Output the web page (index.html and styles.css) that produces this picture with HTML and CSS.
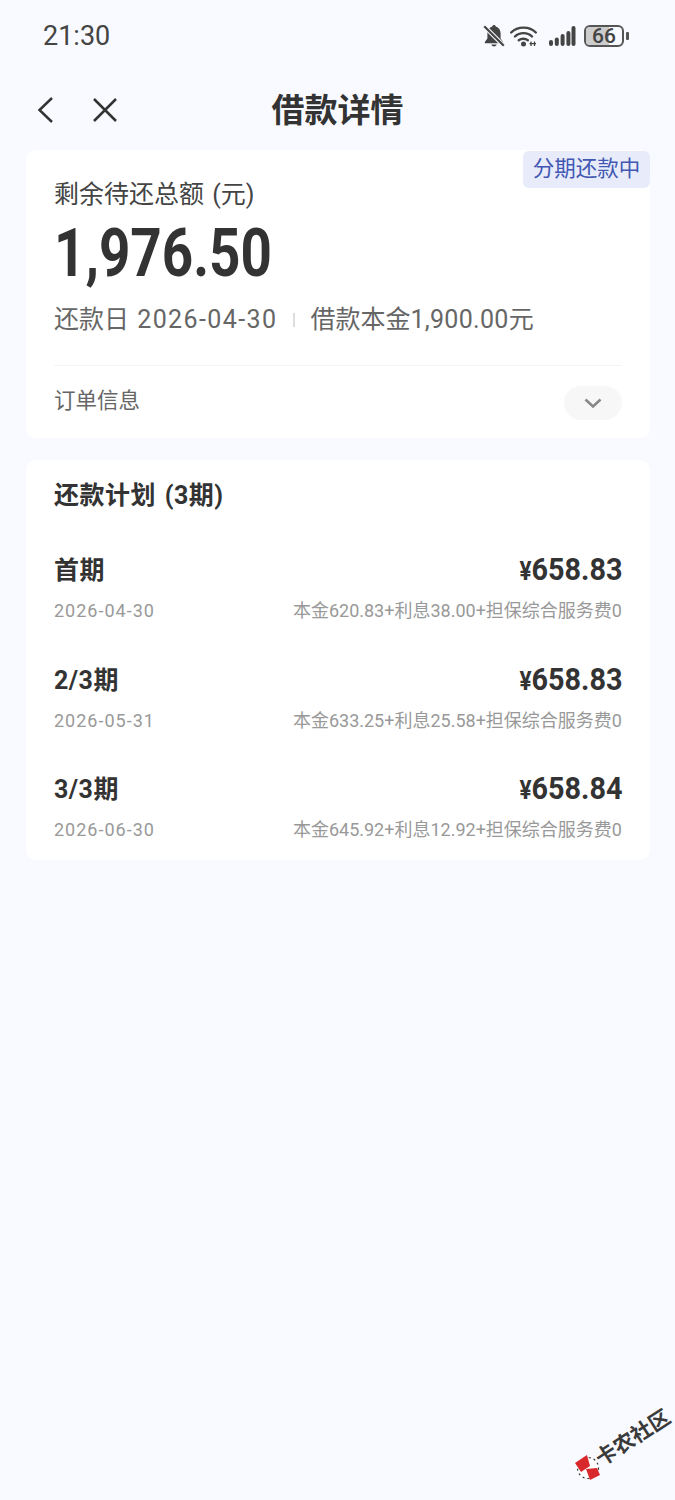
FILE: index.html
```html
<!DOCTYPE html>
<html lang="zh-CN">
<head>
  <meta charset="UTF-8">
  <meta name="viewport" content="width=device-width, initial-scale=1.0">
  <title>借款详情</title>
  <link rel="stylesheet" href="styles.css">
</head>
<body>
  <div class="page">
    <div class="status-bar">
      <div class="clock">21:30</div>
      <div class="status-icons">
        <svg class="icon-bell" width="22" height="22" viewBox="2 2 18 18">
          <path d="M11 2c-.8 0-1.300.5-1.400 1.200C7 4 5.600 6 5.600 8.800v4.200L3.500 16v1h15v-1l-2.100-3V8.800C16.400 6 15 4 12.400 3.200 12.300 2.500 11.800 2 11 2z" fill="#444"/>
          <path d="M8.800 18h4.400c-.3 1-1.100 1.600-2.200 1.600S9.100 19 8.800 18z" fill="#444"/>
          <path d="M3 3l16 16" stroke="#f9faff" stroke-width="3.600"/>
          <path d="M3 3l16 16" stroke="#444" stroke-width="1.800"/>
        </svg>
        <svg class="icon-wifi" width="28" height="22" viewBox="0 0 28 22">
          <path d="M1.200 7.500C7.500 1 19.500 1 25.800 7.500M5 11.500C9.500 7 17.500 7 22 11.500M8.800 15.200c2.500-2 6.500-2 9 0" fill="none" stroke="#444" stroke-width="2.400" stroke-linecap="round"/>
          <circle cx="13.500" cy="19" r="2.500" fill="#444"/>
          <path d="M21 16.500v4.500M24.500 16.500v4.500M19.500 18.700h6.500" stroke="#444" stroke-width="1.300"/>
        </svg>
        <svg class="icon-signal" width="28" height="22" viewBox="0 0 28 22">
          <rect x="1" y="15" width="4" height="6" rx="2" fill="#444"/>
          <rect x="6.800" y="12.500" width="4" height="8.500" rx="2" fill="#444"/>
          <rect x="12.600" y="9" width="4" height="12" rx="2" fill="#444"/>
          <rect x="18.400" y="6" width="4" height="15" rx="2" fill="#444"/>
          <rect x="23.500" y="1" width="4" height="20" rx="2" fill="#444"/>
        </svg>
        <div class="battery">
          <div class="battery-body"><span class="battery-level"></span><span class="battery-num">66</span></div>
          <div class="battery-tip"></div>
        </div>
      </div>
    </div>

    <div class="nav-bar">
      <svg class="nav-back" width="20" height="28" viewBox="0 0 20 28">
        <path d="M16 2L3.500 14 16 26" fill="none" stroke="#333" stroke-width="2.500"/>
      </svg>
      <svg class="nav-close" width="28" height="28" viewBox="0 0 28 28">
        <path d="M3 3l22 22M25 3L3 25" fill="none" stroke="#333" stroke-width="2.500"/>
      </svg>
      <div class="nav-title">借款详情</div>
    </div>

    <div class="card summary">
      <div class="tag">分期还款中</div>
      <div class="summary-label">剩余待还总额 (元)</div>
      <div class="summary-amount">1,976.50</div>
      <div class="summary-meta">
        <span class="meta-date">还款日 <span class="num-wide">2026-04-30</span></span>
        <span class="meta-sep"></span>
        <span>借款本金<span class="num-mid">1,900.00</span>元</span>
      </div>
      <div class="order-row">
        <div class="order-label">订单信息</div>
        <div class="order-toggle">
          <svg width="18" height="11" viewBox="0 0 18 11">
            <path d="M1.500 1.500L9 8.500l7.500-7" fill="none" stroke="#888" stroke-width="2.600"/>
          </svg>
        </div>
      </div>
    </div>

    <div class="card plan">
      <div class="plan-title">还款计划 (3期)</div>
      <div class="plan-row">
        <div class="plan-line">
          <div class="plan-name">首期</div>
          <div class="plan-money"><span class="yen">¥</span>658.83</div>
        </div>
        <div class="plan-line plan-sub">
          <div class="plan-date">2026-04-30</div>
          <div>本金620.83+利息38.00+担保综合服务费0</div>
        </div>
      </div>
      <div class="plan-row">
        <div class="plan-line">
          <div class="plan-name">2/3期</div>
          <div class="plan-money"><span class="yen">¥</span>658.83</div>
        </div>
        <div class="plan-line plan-sub">
          <div class="plan-date">2026-05-31</div>
          <div>本金633.25+利息25.58+担保综合服务费0</div>
        </div>
      </div>
      <div class="plan-row">
        <div class="plan-line">
          <div class="plan-name">3/3期</div>
          <div class="plan-money"><span class="yen">¥</span>658.84</div>
        </div>
        <div class="plan-line plan-sub">
          <div class="plan-date">2026-06-30</div>
          <div>本金645.92+利息12.92+担保综合服务费0</div>
        </div>
      </div>
    </div>

    <svg class="watermark-icon" width="30" height="30" viewBox="0 0 30 30">
      <circle cx="15" cy="15" r="10.500" fill="#fff" stroke="#333" stroke-width="1.200" stroke-dasharray="2 3"/>
      <path d="M2 10L14 2l3 11-9 6z" fill="#d9282c"/>
      <path d="M13 16l11-1 3 7-10 5z" fill="#d9282c"/>
    </svg>
    <div class="watermark-text">卡农社区</div>
  </div>
</body>
</html>
```

FILE: styles.css
```css
body {
  margin: 0;
  padding: 0;
  background-color: #f9faff;
  color: #333;
  font-family: 'Roboto', 'Noto Sans CJK SC', sans-serif;
}

.page {
  position: relative;
  width: 675px;
  height: 1500px;
  overflow: hidden;
}

/* status bar */
.status-bar {
  height: 72px;
  display: flex;
  justify-content: space-between;
  align-items: center;
  padding: 0 46px 0 43px;
  box-sizing: border-box;
}

.clock {
  font-size: 27px;
  color: #444;
}

.status-icons {
  display: flex;
  align-items: center;
}

.icon-wifi {
  margin-left: 5px;
}

.icon-signal {
  margin-left: 10px;
}

.battery {
  display: flex;
  align-items: center;
  gap: 2px;
  margin-left: 8px;
}

.battery-body {
  position: relative;
  width: 40px;
  height: 22px;
  box-sizing: border-box;
  border: 2px solid #555;
  border-radius: 6px;
  overflow: hidden;
  text-align: center;
}

.battery-level {
  position: absolute;
  left: 0;
  top: 0;
  bottom: 0;
  width: 63%;
  background-color: #ccc;
}

.battery-num {
  position: relative;
  font-size: 21px;
  font-weight: 500;
  line-height: 18px;
  color: #444;
  display: block;
}

.battery-tip {
  width: 3px;
  height: 8px;
  background-color: #555;
  border-radius: 1px;
}

/* nav */
.nav-bar {
  position: relative;
  height: 76px;
  margin-bottom: 2px;
  display: flex;
  align-items: center;
  padding-left: 36px;
  box-sizing: border-box;
}

.nav-close {
  margin-left: 35px;
}

.nav-title {
  position: absolute;
  left: 0;
  right: 0;
  padding-bottom: 4px;
  text-align: center;
  font-size: 33px;
  font-weight: 700;
  color: #333;
}

.card {
  background-color: #fff;
  margin: 0 25px 0 26px;
  border-radius: 10px;
  padding: 0 28px;
}

.summary {
  position: relative;
  height: 288px;
  box-sizing: border-box;
}

.tag {
  position: absolute;
  top: 1px;
  right: 0;
  width: 127px;
  height: 37px;
  line-height: 35px;
  text-align: center;
  font-size: 21.500px;
  color: #4257b2;
  background-color: #e8ebfa;
  border-radius: 6px;
}

.summary-label {
  padding-top: 28px;
  font-size: 25px;
  line-height: 34px;
  color: #444;
  word-spacing: 2px;
}

/* DIN-like digits: no condensed font here, so squeeze Roboto */
.summary-amount {
  font-size: 66px;
  line-height: 66px;
  font-weight: 700;
  color: #333;
  margin-top: 9px;
  transform: scaleX(0.83);
  transform-origin: left center;
}

.summary-meta {
  display: flex;
  align-items: center;
  margin-top: 15px;
  font-size: 25px;
  line-height: 36px;
  color: #666;
}

.meta-date {
  word-spacing: 2px;
}

.num-wide {
  letter-spacing: 1.400px;
}

.num-mid {
  letter-spacing: 0.300px;
}

.meta-sep {
  width: 2px;
  height: 14px;
  background-color: #ddd;
  margin: 0 15px 0 16px;
}

.order-row {
  display: flex;
  justify-content: space-between;
  align-items: center;
  margin-top: 27px;
  height: 72px;
  box-sizing: border-box;
  border-top: 1px solid #f4f4f4;
}

.order-label {
  font-size: 21.500px;
  color: #666;
  margin-bottom: 7px;
}

.order-toggle {
  width: 58px;
  height: 34px;
  margin-top: 3px;
  border-radius: 17px;
  background-color: #f7f7f7;
  display: flex;
  align-items: center;
  justify-content: center;
}

.plan {
  margin-top: 22px;
  height: 400px;
  box-sizing: border-box;
  padding-top: 19px;
}

.plan-title {
  font-size: 25px;
  line-height: 34px;
  font-weight: 700;
  color: #333;
  margin-bottom: 38px;
  word-spacing: 2px;
  letter-spacing: 0.500px;
}

.plan-row {
  height: 109.500px;
}

.plan-line {
  display: flex;
  justify-content: space-between;
  align-items: center;
}

.plan-name {
  font-size: 25px;
  font-weight: 700;
  line-height: 38px;
  letter-spacing: 0.500px;
}

.plan-money {
  font-size: 32px;
  font-weight: 700;
  line-height: 38px;
  margin-top: -1px;
  transform: scaleX(0.9);
  transform-origin: right center;
}

.yen {
  font-size: 25px;
}

.plan-sub {
  font-size: 18px;
  line-height: 26px;
  color: #999;
  margin-top: 7px;
}

.plan-date {
  letter-spacing: 1px;
}

/* forum stamp over the corner */
.watermark-icon {
  position: absolute;
  left: 573px;
  top: 1453px;
}

.watermark-text {
  position: absolute;
  left: 591px;
  top: 1423px;
  line-height: 30px;
  font-size: 21px;
  font-weight: 700;
  color: #3a3a3a;
  white-space: nowrap;
  transform: rotate(-33deg);
}
```
